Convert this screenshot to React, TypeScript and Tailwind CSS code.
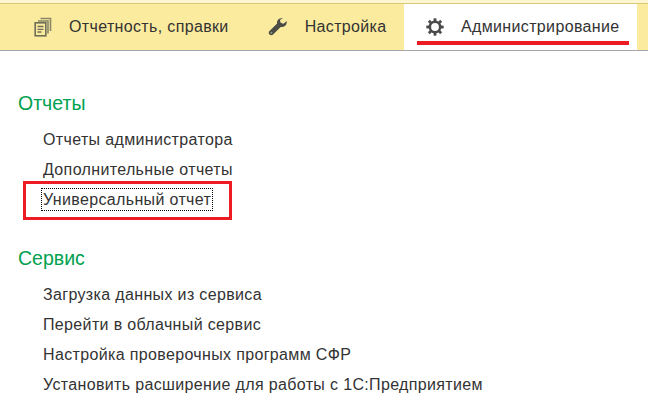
import React from "react";

const font = { fontFamily: '"Liberation Sans", Arial, sans-serif' };

function DocsIcon() {
  return (
    <svg width="18" height="20" viewBox="0 0 18 20" className="shrink-0">
      <path d="M6.5 1.5H16.5V14M4 4H14V16.5" fill="none" stroke="#8a8868" strokeWidth="1.6" />
      <rect x="1.2" y="5.8" width="10.6" height="13" fill="#fbeb9f" stroke="#6f6e58" strokeWidth="1.6" />
      <path d="M3.5 9.5H9.5M3.5 12.3H9.5M3.5 15H7.5" stroke="#6f6e58" strokeWidth="1.3" />
    </svg>
  );
}

function WrenchIcon() {
  return (
    <svg width="20" height="20" viewBox="0 0 20 20" className="shrink-0">
      <path
        d="M13.2 1.2c-2.7.2-4.6 2.5-4.1 5.3L1.5 14c-1 1-1 2.6 0 3.6s2.600 1 3.600 0l7.600-7.700c2.900.7 5.800-1.300 6-4.500l.1-1.400-3.300 2.700-2.900-.9-.6-2.700L15 1z"
        fill="#4c4c46"
      />
      <circle cx="3.400" cy="15.800" r="1" fill="#9c9880" />
    </svg>
  );
}

function GearIcon() {
  const teeth = [0, 45, 90, 135, 180, 225, 270, 315];
  return (
    <svg width="18" height="18" viewBox="0 0 18 18" className="shrink-0">
      {teeth.map((a) => (
        <rect key={a} x="7.600" y="0.300" width="2.800" height="4" fill="#4a4a4a" transform={`rotate(${a} 9 9)`} />
      ))}
      <circle cx="9" cy="9" r="5.200" fill="none" stroke="#4a4a4a" strokeWidth="2.600" />
    </svg>
  );
}

function Tab({ icon, label, active }: { icon: React.ReactNode; label: string; active?: boolean }) {
  return (
    <div className={active ? "relative flex h-full w-[233px] items-center gap-[17px] bg-white pb-[1px] pl-[22px]" : "flex items-center"}>
      {icon}
      <span className={active ? "text-[16px] tracking-[0.35px] text-[#333]" : "ml-[17px] text-[16px] tracking-[0.35px] text-[#333]"}>{label}</span>
      {active && <div className="absolute bottom-[5px] left-[13px] h-[4px] w-[212px] bg-[#ed1c24]" />}
    </div>
  );
}

function Item({ children }: { children: React.ReactNode }) {
  return <div className="flex h-[30px] items-center pl-[43px] text-[16px] tracking-[0.35px] text-[#333]">{children}</div>;
}

function Section({ title, children }: { title: string; children: React.ReactNode }) {
  return (
    <section>
      <h2 className="mb-[8px] h-[27px] pl-[18px] text-[19.5px] leading-[27px] font-normal text-[#00a14f]">{title}</h2>
      {children}
    </section>
  );
}

export default function App() {
  return (
    <div className="h-[420px] w-[648px] overflow-hidden bg-white" style={font}>
      <header className="flex h-[51px] flex-col border-b border-[#a5a5a5] bg-[#fbeb9f]">
        <div className="h-[4px] shrink-0 border-b border-[#d9c77a] bg-[#fdf6d0]" />
        <div className="flex min-h-0 flex-1 items-center pr-[11px] pl-[34px]">
          <Tab icon={<DocsIcon />} label="Отчетность, справки" />
          <div className="ml-[39px]">
            <Tab icon={<WrenchIcon />} label="Настройка" />
          </div>
          <div className="ml-auto h-full">
            <Tab icon={<GearIcon />} label="Администрирование" active />
          </div>
        </div>
      </header>
      <main className="pt-[39px]">
        <Section title="Отчеты">
          <Item>Отчеты администратора</Item>
          <Item>Дополнительные отчеты</Item>
          <Item>
            <span className="relative -mt-[2px] -ml-[2px] border border-dotted border-black px-px leading-[21px]">
              Универсальный отчет
              <span className="absolute -top-[8px] -right-[20px] -bottom-[10px] -left-[19px] border-[3px] border-[#ed1c24]" />
            </span>
          </Item>
        </Section>
        <div className="mt-[30px]">
          <Section title="Сервис">
            <Item>Загрузка данных из сервиса</Item>
            <Item>Перейти в облачный сервис</Item>
            <Item>Настройка проверочных программ СФР</Item>
            <Item>Установить расширение для работы с 1С:Предприятием</Item>
          </Section>
        </div>
      </main>
    </div>
  );
}
